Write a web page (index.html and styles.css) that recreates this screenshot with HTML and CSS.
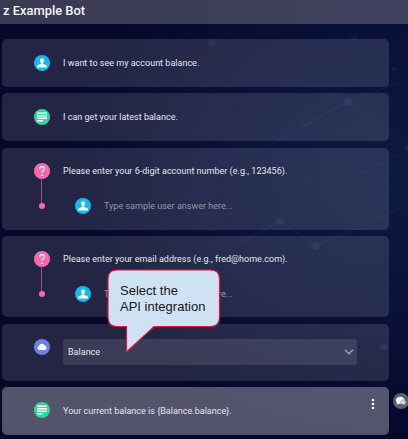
FILE: index.html
```html
<!DOCTYPE html>
<html lang="en">
<head>
<meta charset="utf-8">
<title>z Example Bot</title>
<link rel="stylesheet" href="styles.css">
</head>
<body>
<svg width="0" height="0" class="defs">
  <symbol id="user" viewBox="0 0 16 16"><circle cx="8" cy="8" r="8" fill="#14b9ed"/><path d="M8 3.3c1.5 0 2.1 1.1 2 2.5-.1 1-.4 1.7-.9 2.200v1l2.800.9c.8.3 1.100.9 1.100 2.500H3c0-1.600.3-2.200 1.100-2.500L6.900 9V8C6.400 7.500 6.100 6.800 6 5.800c-.1-1.400.5-2.500 2-2.500z" fill="#fff"/></symbol>
  <symbol id="message" viewBox="0 0 16 16"><circle cx="8" cy="8" r="8" fill="#37d39b"/><path d="M3 4.300h10M3 6.800h10M3 9.300h10M3 11.800h5.700" stroke="#fff" stroke-width="1.500"/></symbol>
  <symbol id="question" viewBox="0 0 16 16"><circle cx="8" cy="8" r="8" fill="#fa69ae"/><path d="M5.700 5.900C5.800 4.300 6.700 3.600 8 3.600s2.300.8 2.300 2.100C10.300 7.400 8 7.600 8 9.700" fill="none" stroke="#fff" stroke-width="1.200"/><circle cx="8" cy="11.900" r=".85" fill="#fff"/></symbol>
  <symbol id="cloud" viewBox="0 0 16 16"><circle cx="8" cy="8" r="8" fill="#6d80e4"/><path d="M5.200 11a2.100 2.100 0 0 1-.2-4.100 3.100 3.100 0 0 1 5.700-.3A2.300 2.300 0 0 1 11 11z" fill="#fff"/></symbol>
</svg>
<svg class="backdrop" viewBox="0 0 408 439">
  <g stroke="#2c5c92" stroke-opacity=".16" fill="none">
    <path d="M310 85l37 17 61-23M347 102l61 43M347 102l-77 43M280 221l36 25 92-41M280 221l-40 22M408 150l-50 25"/>
  </g>
  <g fill="#3b6eaa" fill-opacity=".13">
    <circle cx="354" cy="38" r="3"/><circle cx="212" cy="43" r="4"/><circle cx="394" cy="69" r="2"/><circle cx="348" cy="102" r="4"/><circle cx="280" cy="221" r="4"/><circle cx="316" cy="246" r="4"/><circle cx="384" cy="347" r="4"/><circle cx="407" cy="148" r="3"/>
  </g>
</svg>
<header class="topbar"><h1>z Example Bot</h1></header>
<main class="flow">
  <section class="card"><svg class="icon"><use href="#user"/></svg><p>I want to see my account balance.</p></section>
  <section class="card second"><svg class="icon"><use href="#message"/></svg><p>I can get your latest balance.</p></section>
  <section class="card ask">
    <div class="row"><svg class="icon"><use href="#question"/></svg><p>Please enter your 6-digit account number (e.g., 123456).</p></div>
    <div class="row answer"><span class="stem"></span><svg class="icon"><use href="#user"/></svg><p>Type sample user answer here...</p></div>
  </section>
  <section class="card ask last">
    <div class="row"><svg class="icon"><use href="#question"/></svg><p>Please enter your email address (e.g., fred@home.com).</p></div>
    <div class="row answer"><span class="stem"></span><svg class="icon"><use href="#user"/></svg><p>Type sample user answer here...</p></div>
  </section>
  <section class="card api"><svg class="icon"><use href="#cloud"/></svg>
    <div class="select"><span>Balance</span><svg width="10" height="6" viewBox="0 0 10 6"><path d="M1 .8l4 4 4-4" fill="none" stroke="#a2a4ae" stroke-width="1.300"/></svg></div>
  </section>
  <div class="selected">
    <section class="card active"><svg class="icon"><use href="#message"/></svg><p>Your current balance is {Balance.balance}.</p>
      <svg class="more" width="4" height="12" viewBox="0 0 4 12" fill="#fff"><circle cx="2" cy="2" r="1.350"/><circle cx="2" cy="6" r="1.350"/><circle cx="2" cy="10" r="1.350"/></svg>
    </section>
    <svg class="chat" viewBox="0 0 16 16"><circle cx="8" cy="8" r="8" fill="#5b5e74"/><path d="M7.300 3.800c2.400 0 4.200 1.500 4.200 3.500s-1.800 3.500-4.200 3.500l-1.300-.1-2.500.9.500-1.900C3.400 9 3 8.200 3 7.300c0-2 1.900-3.500 4.300-3.500z" fill="#fff"/><path d="M10.300 6.900c1.600 0 2.700.9 2.700 2.200 0 .6-.2 1.100-.5 1.500l.3 1.500-1.500-.6c-2 .3-3.700-.7-3.700-2.300 0-1.300 1.100-2.300 2.700-2.300z" fill="#d5d5dc" stroke="#5b5e74" stroke-width=".5"/></svg>
  </div>
</main>
<aside class="callout">
  <svg width="115" height="84" viewBox="0 0 115 84"><path d="M10 1H103.500Q112.500 1 112.500 10V48.500Q112.500 57.500 103.500 57.500H47L19.500 83V57.500H10Q1 57.500 1 48.500V10Q1 1 10 1Z" fill="#cfe2f3" stroke="#e3173e" stroke-width="1.200"/></svg>
  <p>Select the<br>API integration</p>
</aside>
</body>
</html>
```
FILE: styles.css
```css
* { box-sizing: border-box; }
body {
  margin: 0;
  height: 439px;
  overflow: hidden;
  position: relative;
  background: radial-gradient(ellipse 330px 260px at 390px 175px, #0c1a42 0%, #0a1239 50%, #06072b 100%);
  font-family: Roboto, sans-serif;
  font-size: 9px;
  letter-spacing: .01px;
  color: #e4e5ed;
}
p, h1 { margin: 0; }
.defs { position: absolute; }
.backdrop {
  position: absolute;
  inset: 0;
  width: 408px;
  height: 439px;
  z-index: -1;
}
.topbar {
  height: 24px;
  padding: 2px 3px;
  background: linear-gradient(90deg, #393950, #404260);
}
.topbar h1 {
  font-size: 12.9px;
  line-height: 17px;
  font-weight: 500;
  color: #f5f5fa;
}
.flow {
  padding: 15px 0 0 2px;
  display: flex;
  flex-direction: column;
}
.card {
  width: 387px;
  height: 48px;
  flex-shrink: 0;
  border-radius: 5px;
  padding: 0 32px;
  display: flex;
  align-items: center;
  gap: 13px;
  background: rgba(255, 255, 255, .12);
  margin-bottom: 6px;
}
.icon { width: 16px; height: 16px; flex-shrink: 0; }
.card.second { margin-bottom: 7px; }
.card.ask {
  height: 82px;
  padding-top: 15px;
  flex-direction: column;
  align-items: flex-start;
  gap: 19px;
}
.card.last { height: 81px; margin-bottom: 7px; }
.row { display: flex; align-items: center; gap: 13px; height: 16px; }
.answer { color: #9496a2; }
.stem {
  width: 16px;
  height: 16px;
  margin-right: 12px;
  position: relative;
}
.stem::before {
  content: "";
  position: absolute;
  left: 7px;
  top: -19px;
  width: 1px;
  height: 27px;
  background: #a04c87;
}
.stem::after {
  content: "";
  position: absolute;
  left: 5px;
  top: 5px;
  width: 6px;
  height: 6px;
  border-radius: 50%;
  background: #fa69ae;
}
.card.api {
  height: 57px;
  padding-top: 15px;
  align-items: flex-start;
}
.select {
  flex: 1;
  height: 26px;
  padding: 0 3px 0 5px;
  border-radius: 3px;
  background: rgba(255, 255, 255, .1);
  display: flex;
  align-items: center;
  justify-content: space-between;
}
.selected { display: flex; gap: 4px; }
.card.active {
  background: rgba(255, 255, 255, .31);
  padding-right: 14px;
}
.card.active .icon { margin-top: -2px; }
.card.active p { margin-top: -1px; }
.more { margin: -14px 0 0 auto; }
.chat { width: 16px; height: 16px; margin-top: 6px; flex-shrink: 0; }
.callout { position: absolute; left: 107px; top: 269px; }
.callout svg { display: block; }
.callout p {
  position: absolute;
  left: 13px;
  top: 14px;
  font: 13px/16px "Liberation Sans", Arial, sans-serif;
  color: #15181c;
  white-space: nowrap;
}
```
